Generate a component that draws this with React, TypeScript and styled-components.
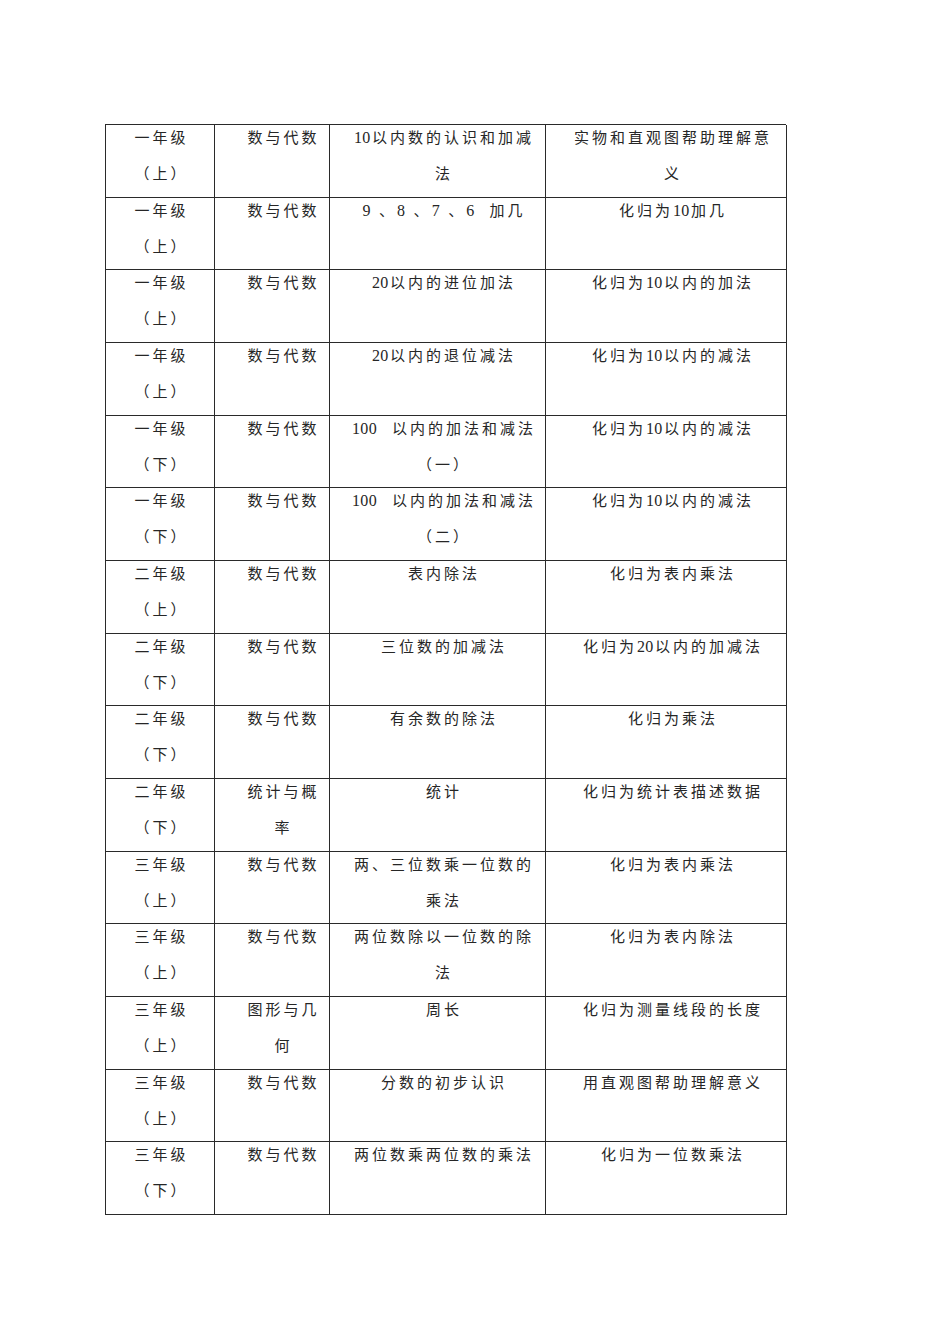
import React from 'react'
import styled, { createGlobalStyle } from 'styled-components'

const GlobalStyle = createGlobalStyle`
  html, body {
    margin: 0;
    padding: 0;
    background: #ffffff;
  }
  body {
    font-family: "Liberation Serif", "Noto Sans CJK SC", serif;
    color: #262626;
  }
`

const Page = styled.div`
  width: 950px;
  min-height: 1344px;
  box-sizing: border-box;
  padding: 124px 0 0 105px;
`

const Table = styled.div`
  display: grid;
  grid-template-columns: 109px 115px 216px 241px;
  grid-auto-rows: 72.67px;
  width: 681px;
  border-top: 1px solid #2a2a2a;
  border-left: 1px solid #2a2a2a;
  box-sizing: border-box;
`

const Cell = styled.div<{ $shift: number }>`
  border-right: 1px solid #2a2a2a;
  border-bottom: 1px solid #2a2a2a;
  box-sizing: border-box;
  padding-left: ${(p) => p.$shift + 3}px;
  text-align: center;
  font-size: 15px;
  letter-spacing: 3px;
  line-height: 36px;
  overflow: hidden;
`

const Lines = styled.div`
  margin-top: -5px;
`

const Line = styled.div`
  white-space: pre;
`

// digits in the source are set tight, unlike the spaced CJK glyphs
const Num = styled.span`
  letter-spacing: 0.3px;
  font-size: 16px;
  margin-right: 1.5px;
`

type Row = [string[], string[], string[], string[]]

const shifts = [0, 20, 10, 11]

const rows: Row[] = [
  [['一年级', '（上）'], ['数与代数'], ['10以内数的认识和加减', '法'], ['实物和直观图帮助理解意', '义']],
  [['一年级', '（上）'], ['数与代数'], ['9 、8 、7 、6  加几'], ['化归为10加几']],
  [['一年级', '（上）'], ['数与代数'], ['20以内的进位加法'], ['化归为10以内的加法']],
  [['一年级', '（上）'], ['数与代数'], ['20以内的退位减法'], ['化归为10以内的减法']],
  [['一年级', '（下）'], ['数与代数'], ['100  以内的加法和减法', '（一）'], ['化归为10以内的减法']],
  [['一年级', '（下）'], ['数与代数'], ['100  以内的加法和减法', '（二）'], ['化归为10以内的减法']],
  [['二年级', '（上）'], ['数与代数'], ['表内除法'], ['化归为表内乘法']],
  [['二年级', '（下）'], ['数与代数'], ['三位数的加减法'], ['化归为20以内的加减法']],
  [['二年级', '（下）'], ['数与代数'], ['有余数的除法'], ['化归为乘法']],
  [['二年级', '（下）'], ['统计与概', '率'], ['统计'], ['化归为统计表描述数据']],
  [['三年级', '（上）'], ['数与代数'], ['两、三位数乘一位数的', '乘法'], ['化归为表内乘法']],
  [['三年级', '（上）'], ['数与代数'], ['两位数除以一位数的除', '法'], ['化归为表内除法']],
  [['三年级', '（上）'], ['图形与几', '何'], ['周长'], ['化归为测量线段的长度']],
  [['三年级', '（上）'], ['数与代数'], ['分数的初步认识'], ['用直观图帮助理解意义']],
  [['三年级', '（下）'], ['数与代数'], ['两位数乘两位数的乘法'], ['化归为一位数乘法']],
]

const renderText = (t: string) =>
  t.split(/(\d+)/).map((part, i) =>
    /^\d+$/.test(part) ? <Num key={i}>{part}</Num> : <React.Fragment key={i}>{part}</React.Fragment>
  )

export default function App() {
  return (
    <Page>
      <GlobalStyle />
      <Table>
        {rows.map((row, r) =>
          row.map((lines, c) => (
            <Cell key={`${r}-${c}`} $shift={shifts[c]}>
              <Lines>
                {lines.map((t, i) => (
                  <Line key={i}>{renderText(t)}</Line>
                ))}
              </Lines>
            </Cell>
          ))
        )}
      </Table>
    </Page>
  )
}
